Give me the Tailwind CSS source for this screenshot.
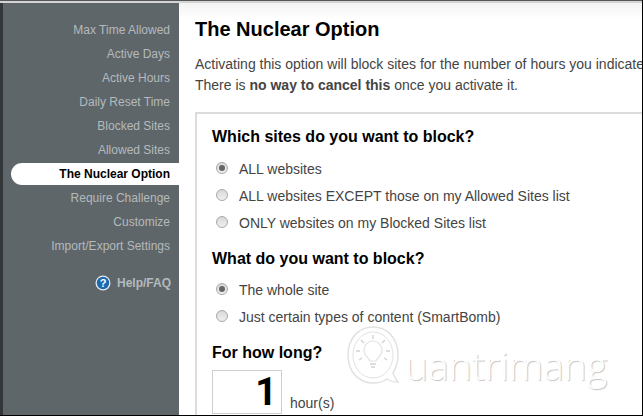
<!DOCTYPE html>
<html lang="en">
<head>
    <meta charset="UTF-8">
    <title>The Nuclear Option</title>
    <script src="https://cdn.jsdelivr.net/npm/@tailwindcss/browser@4"></script>
</head>
<body class="w-[643px] h-[416px] overflow-hidden bg-white font-['Liberation_Sans',Arial,sans-serif] relative">
    <div class="h-[416px] flex flex-col border-r border-b border-black">
        <!-- top strip -->
        <div class="h-[3px] shrink-0 bg-[#d4d4d4] border-t border-[#555]"></div>
        <div class="flex flex-1 min-h-0">
            <!-- sidebar -->
            <div class="w-[179px] shrink-0 bg-[#5f6669] border-l-[3px] border-[#33373a] pt-[15px]">
                <ul class="text-[12px] leading-[24px] text-right text-[#b3babd]">
                    <li class="pr-[9px]">Max Time Allowed</li>
                    <li class="pr-[9px]">Active Days</li>
                    <li class="pr-[9px]">Active Hours</li>
                    <li class="pr-[9px]">Daily Reset Time</li>
                    <li class="pr-[9px]">Blocked Sites</li>
                    <li class="pr-[9px]">Allowed Sites</li>
                    <li class="pr-[9px] ml-[8px] h-[22px] my-[1px] leading-[22px] bg-white rounded-l-full text-black font-bold">The Nuclear Option</li>
                    <li class="pr-[9px]">Require Challenge</li>
                    <li class="pr-[9px]">Customize</li>
                    <li class="pr-[9px]">Import/Export Settings</li>
                </ul>
                <div class="mt-[16px] pr-[8px] flex justify-end items-center gap-[6px] text-[12px] font-bold text-[#b3babd]">
                    <svg width="16" height="16" viewBox="0 0 16 16">
                        <circle cx="8" cy="8" r="7.5" fill="#e4eaf0"/>
                        <circle cx="8" cy="8" r="6.2" fill="#1c69ae"/>
                        <text x="8" y="12" text-anchor="middle" font-size="11" font-weight="700" fill="#fff" font-family="Liberation Sans">?</text>
                    </svg>
                    <span>Help/FAQ</span>
                </div>
            </div>
            <!-- main -->
            <div class="flex-1 min-w-0 overflow-hidden pl-[16px] bg-gradient-to-b from-[#f3f3f3] to-white to-[16px]">
                <h1 class="mt-[15px] text-[20px] leading-[23px] font-bold text-black whitespace-nowrap">The Nuclear Option</h1>
                <p class="mt-[13px] text-[14px] leading-[21px] text-[#444] whitespace-nowrap">Activating this option will block sites for the number of hours you indicate.<br>There is <b>no way to cancel this</b> once you activate it.</p>
                <div class="mt-[16px] h-[400px] w-[500px] border-2 border-[#dcdcdc] pl-[15px] pt-[13px] text-[14px] text-[#444] whitespace-nowrap">
                    <h2 class="text-[16px] leading-[20px] font-bold text-black">Which sites do you want to block?</h2>
                    <div class="mt-[12px] flex flex-col gap-[6px]">
                        <label class="flex items-center h-[21px]"><span class="w-[12px] h-[12px] -mt-[4px] ml-[4px] mr-[11px] rounded-full border border-[#a9a9a9] bg-gradient-to-b from-[#d8d8d8] to-[#f0f0f0] flex items-center justify-center"><span class="w-[6px] h-[6px] rounded-full bg-[#666]"></span></span>ALL websites</label>
                        <label class="flex items-center h-[21px]"><span class="w-[12px] h-[12px] -mt-[4px] ml-[4px] mr-[11px] rounded-full border border-[#a9a9a9] bg-gradient-to-b from-[#d8d8d8] to-[#f0f0f0]"></span>ALL websites EXCEPT those on my Allowed Sites list</label>
                        <label class="flex items-center h-[21px]"><span class="w-[12px] h-[12px] -mt-[4px] ml-[4px] mr-[11px] rounded-full border border-[#a9a9a9] bg-gradient-to-b from-[#d8d8d8] to-[#f0f0f0]"></span>ONLY websites on my Blocked Sites list</label>
                    </div>
                    <h2 class="mt-[15px] text-[16px] leading-[20px] font-bold text-black">What do you want to block?</h2>
                    <div class="mt-[11px] flex flex-col gap-[6px]">
                        <label class="flex items-center h-[21px]"><span class="w-[12px] h-[12px] -mt-[4px] ml-[4px] mr-[11px] rounded-full border border-[#a9a9a9] bg-gradient-to-b from-[#d8d8d8] to-[#f0f0f0] flex items-center justify-center"><span class="w-[6px] h-[6px] rounded-full bg-[#666]"></span></span>The whole site</label>
                        <label class="flex items-center h-[21px]"><span class="w-[12px] h-[12px] -mt-[4px] ml-[4px] mr-[11px] rounded-full border border-[#a9a9a9] bg-gradient-to-b from-[#d8d8d8] to-[#f0f0f0]"></span>Just certain types of content (SmartBomb)</label>
                    </div>
                    <h2 class="mt-[15px] text-[16px] leading-[20px] font-bold text-black">For how long?</h2>
                    <div class="mt-[7px] flex items-end gap-[8px]">
                        <div class="w-[70px] h-[44px] border border-[#cfcfcf] text-right pr-[4px] text-[38px] leading-[42px] font-['Roboto',sans-serif] font-bold text-black">1</div>
                        <span class="text-[#444] leading-[20px] mb-[1px]">hour(s)</span>
                    </div>
                </div>
            </div>
        </div>
    </div>
    <!-- watermark -->
    <div class="absolute left-[347px] top-[326px] flex items-start pointer-events-none">
        <svg width="54" height="60" viewBox="0 0 54 60" fill="none" stroke="#e2e2e2">
            <path d="M26 1C12 1 1 12 1 29s11 28 25 28c6 0 10-1 14-4 3 2 7 3 11 3-2-3-4-6-5-9 3-5 5-11 5-18C51 12 40 1 26 1z" stroke-width="1.5"/>
            <path d="M26 6C15 6 6 16 6 29s9 23 20 23c11 0 20-10 20-23S37 6 26 6z" stroke-width="1"/>
            <path d="M23 35c-1-3-6-5-6-11a9 9 0 0 1 18 0c0 6-5 8-6 11z" stroke-width="1.2"/>
            <path d="M23 38h6M24 41h4M26 9v4M14 14l3 3M38 14l-3 3M9 25h4M39 25h4M12 34l3-2M40 34l-3-2" stroke="#d4d4d4" stroke-width="1.5"/>
        </svg>
        <span class="ml-[4px] mt-[17px] text-[39px] leading-[44px] font-['Open_Sans',sans-serif] font-light text-white [text-shadow:1px_1px_1px_#c4c4c4]">uantrimang</span>
    </div>
</body>
</html>
